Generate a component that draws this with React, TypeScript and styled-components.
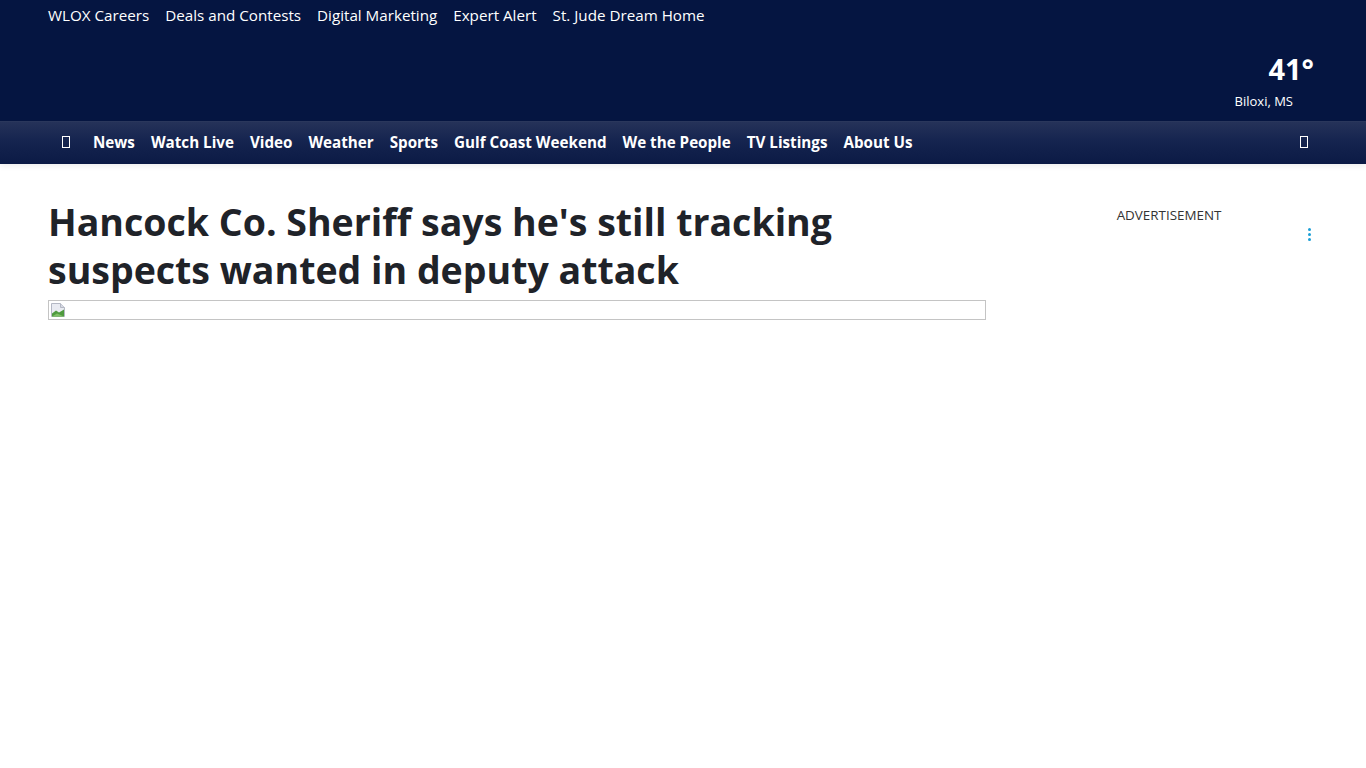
import styled, { createGlobalStyle } from 'styled-components';

const GlobalStyle = createGlobalStyle`
  html, body {
    margin: 0;
    padding: 0;
    background: #ffffff;
    font-family: 'Open Sans', 'Noto Sans', sans-serif;
  }
`;

const topLinks = ['WLOX Careers', 'Deals and Contests', 'Digital Marketing', 'Expert Alert', 'St. Jude Dream Home'];
const navLinks = ['News', 'Watch Live', 'Video', 'Weather', 'Sports', 'Gulf Coast Weekend', 'We the People', 'TV Listings', 'About Us'];

const BrokenImage = () => (
  <svg width="16" height="16" viewBox="0 0 16 16">
    <path d="M1.5 1.5h9l4 4v9h-13z" fill="#e9ebf2" stroke="#b4b8c4" />
    <path d="M10.5 1.5v4h4" fill="#d6d9e3" stroke="#b4b8c4" />
    <path d="M2 14.5v-3l4-3 3 2 5-3v7z" fill="#4e9a3e" />
    <path d="M2 14.5l5-3 7 3z" fill="#7fc066" />
  </svg>
);

export default function App() {
  return (
    <>
      <GlobalStyle />
      <Header>
        <TopBar>
          <TopLinks>
            {topLinks.map((l) => (
              <TopLink key={l}>{l}</TopLink>
            ))}
          </TopLinks>
          <Weather>
            <Temp>41°</Temp>
            <City>Biloxi, MS</City>
          </Weather>
        </TopBar>
        <NavBar>
          <NavInner>
            <GlyphBox />
            {navLinks.map((l) => (
              <NavLink key={l}>{l}</NavLink>
            ))}
            <NavSpacer />
            <GlyphBox />
          </NavInner>
        </NavBar>
      </Header>
      <Page>
        <Main>
          <Headline>Hancock Co. Sheriff says he's still tracking suspects wanted in deputy attack</Headline>
          <ImageFrame>
            <BrokenImage />
          </ImageFrame>
        </Main>
        <Sidebar>
          <AdLabel>ADVERTISEMENT</AdLabel>
          <Kebab>
            <Dot />
            <Dot />
            <Dot />
          </Kebab>
        </Sidebar>
      </Page>
    </>
  );
}

const Header = styled.header`
  background: #051541;
  box-shadow: 0 2px 6px rgba(0, 0, 0, 0.08);
`;

const TopBar = styled.div`
  height: 121px;
  padding: 0 52px 0 48px;
  display: flex;
  justify-content: space-between;
  align-items: flex-start;
`;

const TopLinks = styled.nav`
  display: flex;
  gap: 16px;
  padding-top: 5px;
`;

const TopLink = styled.a`
  color: #ffffff;
  font-size: 15.2px;
  line-height: 20px;
  text-decoration: none;
`;

const Weather = styled.div`
  display: flex;
  flex-direction: column;
  align-items: flex-end;
  padding-top: 51px;
`;

const Temp = styled.div`
  color: #ffffff;
  font-weight: 700;
  font-size: 29px;
  line-height: 36px;
`;

const City = styled.div`
  color: #ffffff;
  font-size: 13px;
  line-height: 18px;
  margin-top: 5px;
  margin-right: 21px;
`;

const NavBar = styled.div`
  height: 43px;
  background: linear-gradient(to bottom, #253259 0%, #15244f 45%, #0b1a45 100%);
  border-top: 1px solid #2a375c;
  box-sizing: border-box;
`;

const NavInner = styled.div`
  height: 100%;
  display: flex;
  align-items: center;
  padding: 0 58px 2px 62px;
  box-sizing: border-box;
  gap: 16px;
`;

const GlyphBox = styled.span`
  display: inline-block;
  width: 6px;
  height: 10px;
  border: 1px solid #ffffff;
  margin-right: 7px;
  &:last-child {
    margin-right: 0;
    margin-top: -1px;
  }
`;

const NavSpacer = styled.div`
  flex: 1;
`;

const NavLink = styled.a`
  color: #ffffff;
  font-weight: 700;
  font-size: 15.2px;
  line-height: 20px;
  text-decoration: none;
  white-space: nowrap;
`;

const Page = styled.div`
  display: flex;
  padding: 0 48px;
  gap: 30px;
`;

const Main = styled.main`
  width: 938px;
  flex-shrink: 0;
`;

const Headline = styled.h1`
  margin: 34px 0 6px;
  font-size: 37.5px;
  line-height: 48px;
  font-weight: 700;
  color: #1f2329;
  max-width: 820px;
`;

const ImageFrame = styled.div`
  height: 20px;
  border: 1px solid #c4c4c4;
  box-sizing: border-box;
  display: flex;
  align-items: flex-start;
  padding: 1px 0 0 1px;
  svg {
    display: block;
  }
`;

const Sidebar = styled.aside`
  width: 300px;
  position: relative;
  padding-top: 42px;
  padding-left: 4px;
  text-align: center;
`;

const AdLabel = styled.div`
  font-size: 13.4px;
  line-height: 18px;
  color: #333333;
`;

const Kebab = styled.div`
  position: absolute;
  right: 7px;
  top: 64px;
  display: flex;
  flex-direction: column;
  gap: 2px;
`;

const Dot = styled.span`
  width: 3px;
  height: 3px;
  border-radius: 50%;
  background: #1a9fd6;
`;
